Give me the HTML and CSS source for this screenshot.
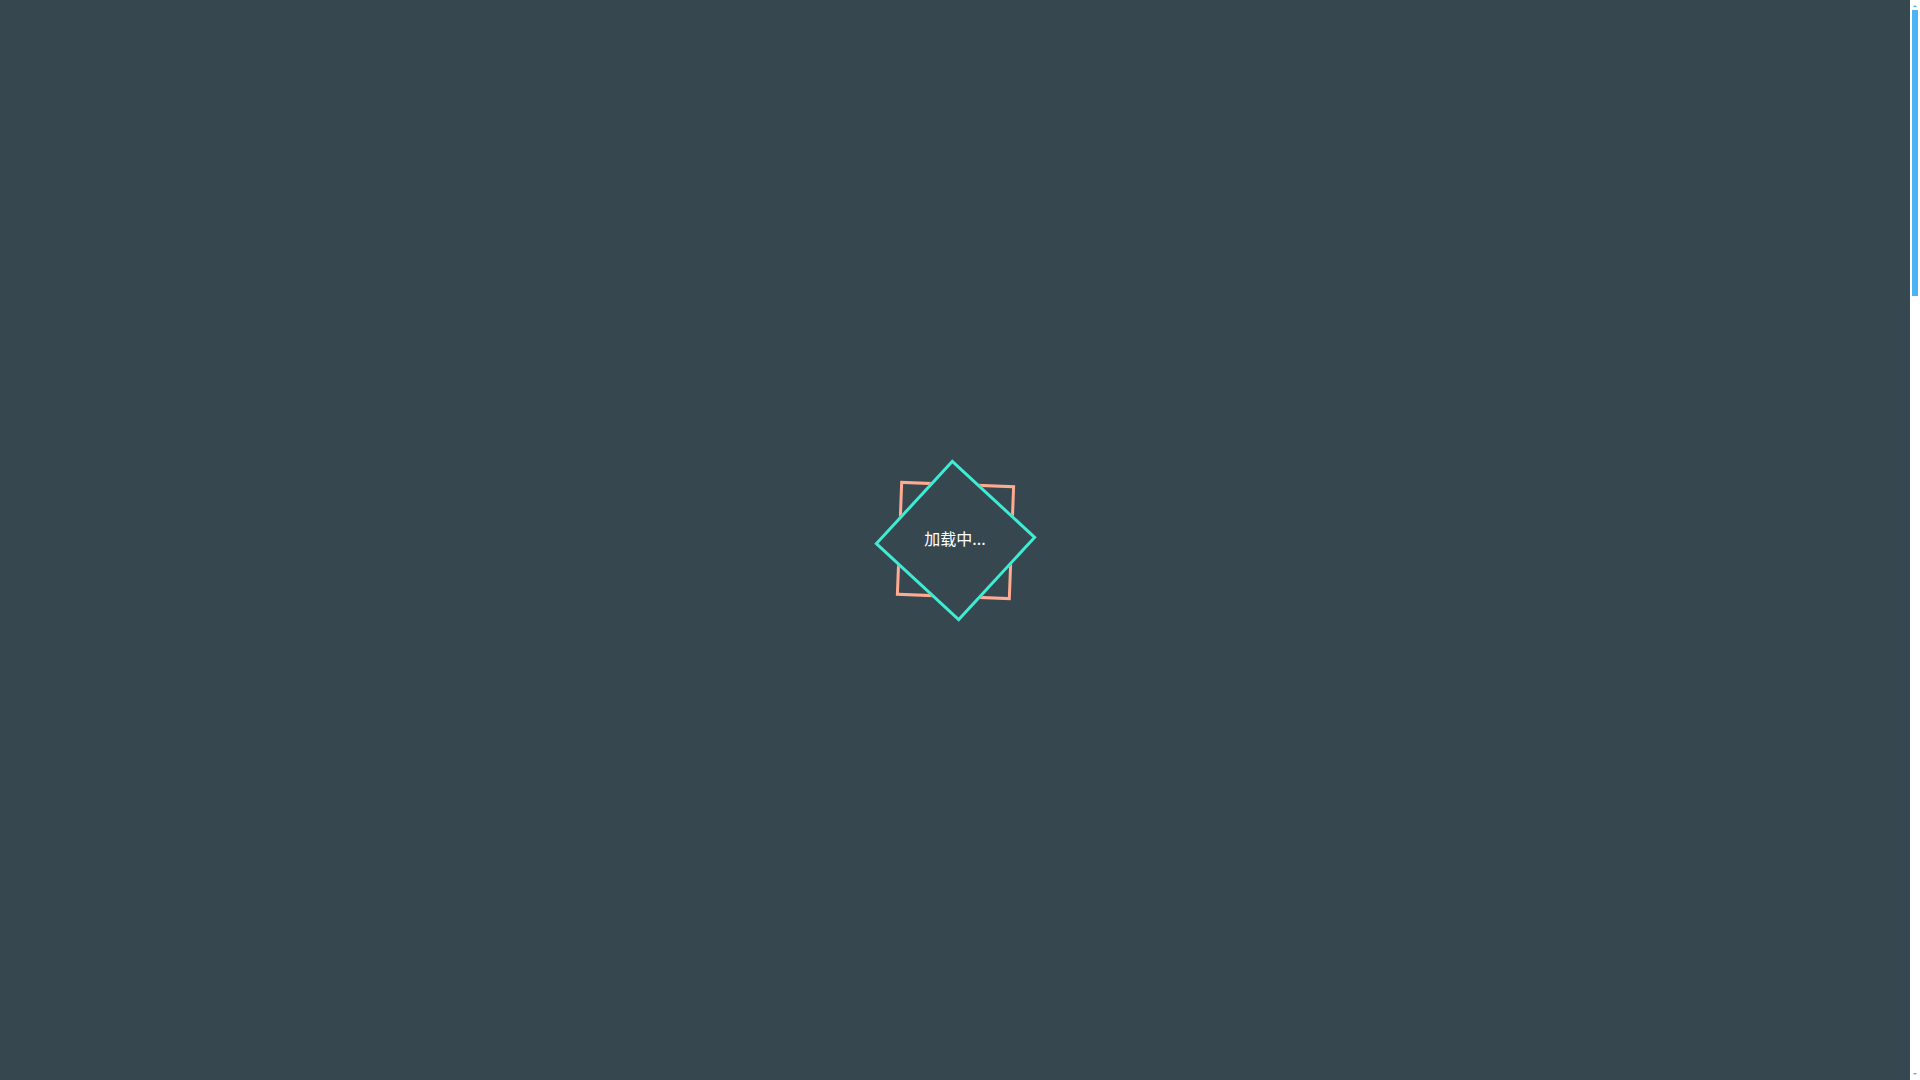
FILE: index.html
```html
<!DOCTYPE html>
<html lang="zh-CN">
<head>
<meta charset="utf-8">
<title>加载中</title>
<link rel="stylesheet" href="styles.css">
</head>
<body>
<div class="page">
  <main class="stage">
    <div class="loader">
      <div class="square square-back"></div>
      <div class="square square-front"></div>
      <div class="label">加载中...</div>
    </div>
  </main>
  <aside class="scrollbar">
    <div class="arrow arrow-up"></div>
    <div class="track"><div class="thumb"></div></div>
    <div class="arrow arrow-down"></div>
  </aside>
</div>
</body>
</html>
```
FILE: styles.css
```css
html, body {
  margin: 0;
  padding: 0;
  height: 100%;
  overflow: hidden;
}
body {
  font-family: "Noto Sans CJK SC", "Noto Sans", sans-serif;
}
.page {
  display: flex;
  width: 100vw;
  height: 100vh;
}
.stage {
  flex: 1;
  background: #37474f;
  display: flex;
  align-items: center;
  justify-content: center;
}
.loader {
  display: grid;
  place-items: center;
  width: 116px;
  height: 116px;
}
.square, .label {
  grid-area: 1 / 1;
}
.square {
  width: 115px;
  height: 115px;
  box-sizing: border-box;
  border: 3px solid;
}
.square-back {
  border-color: #ffab91;
  transform: rotate(2.2deg);
  z-index: 1;
}
.square-front {
  border-color: #3eecd4;
  background: #37474f;
  transform: rotate(42.7deg);
  z-index: 2;
}
.label {
  color: #ffffff;
  font-size: 16px;
  line-height: 20px;
  margin-top: -4px;
  z-index: 3;
}
.scrollbar {
  width: 10px;
  background: #ffffff;
  display: flex;
  flex-direction: column;
  align-items: center;
}
.arrow {
  width: 0;
  height: 0;
  border-left: 2px solid transparent;
  border-right: 2px solid transparent;
}
.arrow-up {
  margin-top: 5px;
  border-bottom: 2px solid #4db3f5;
  margin-bottom: 3px;
}
.arrow-down {
  margin-bottom: 5px;
  border-top: 2px solid #4db3f5;
  margin-top: 3px;
}
.track {
  flex: 1;
  width: 6px;
}
.thumb {
  height: 286px;
  width: 6px;
  background: #4db3f5;
}
```
